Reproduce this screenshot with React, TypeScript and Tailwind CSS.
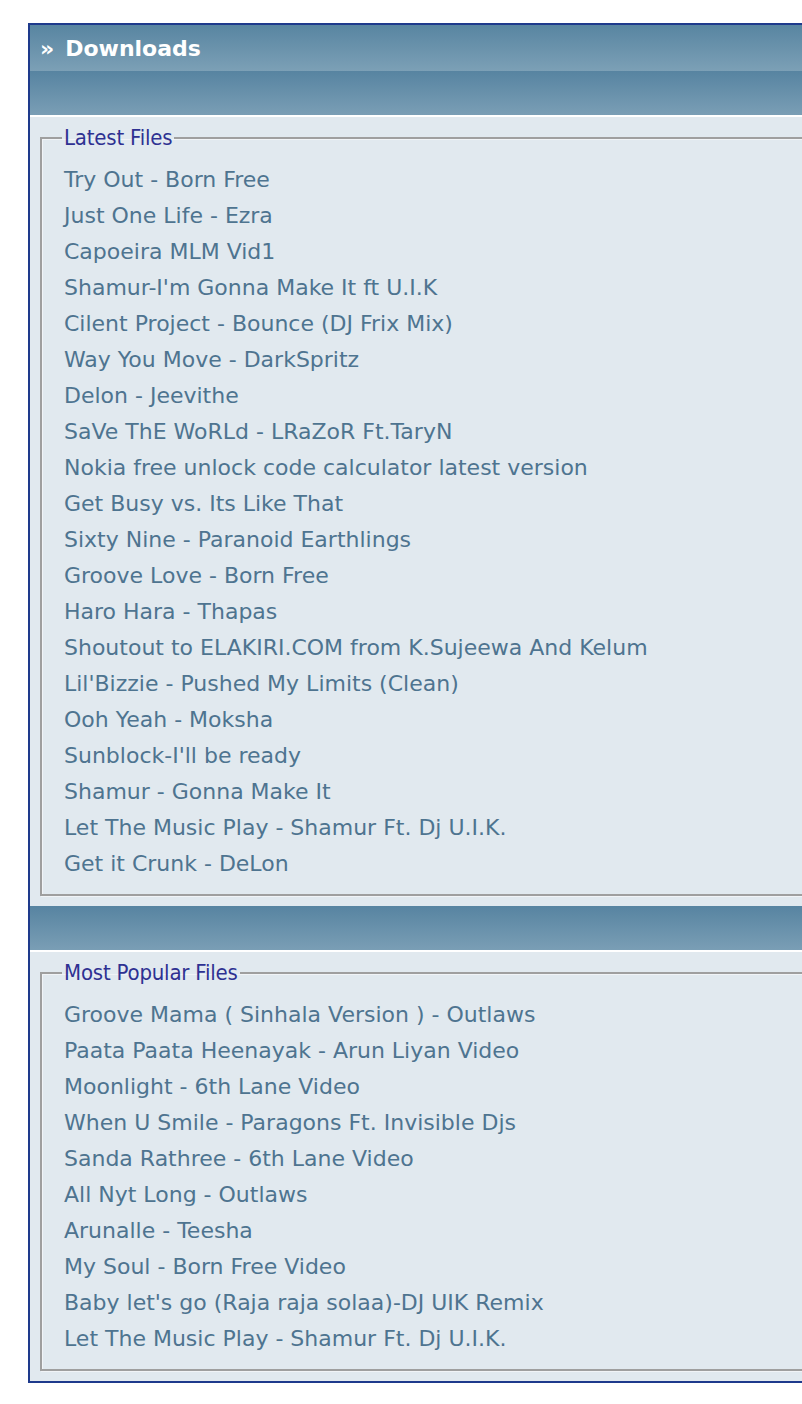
import React from "react";

const latest = [
  "Try Out - Born Free",
  "Just One Life - Ezra",
  "Capoeira MLM Vid1",
  "Shamur-I'm Gonna Make It ft U.I.K",
  "Cilent Project - Bounce (DJ Frix Mix)",
  "Way You Move - DarkSpritz",
  "Delon - Jeevithe",
  "SaVe ThE WoRLd - LRaZoR Ft.TaryN",
  "Nokia free unlock code calculator latest version",
  "Get Busy vs. Its Like That",
  "Sixty Nine - Paranoid Earthlings",
  "Groove Love - Born Free",
  "Haro Hara - Thapas",
  "Shoutout to ELAKIRI.COM from K.Sujeewa And Kelum",
  "Lil'Bizzie - Pushed My Limits (Clean)",
  "Ooh Yeah - Moksha",
  "Sunblock-I'll be ready",
  "Shamur - Gonna Make It",
  "Let The Music Play - Shamur Ft. Dj U.I.K.",
  "Get it Crunk - DeLon",
];

const popular = [
  "Groove Mama ( Sinhala Version ) - Outlaws",
  "Paata Paata Heenayak - Arun Liyan Video",
  "Moonlight - 6th Lane Video",
  "When U Smile - Paragons Ft. Invisible Djs",
  "Sanda Rathree - 6th Lane Video",
  "All Nyt Long - Outlaws",
  "Arunalle - Teesha",
  "My Soul - Born Free Video",
  "Baby let's go (Raja raja solaa)-DJ UIK Remix",
  "Let The Music Play - Shamur Ft. Dj U.I.K.",
];

function Section({ title, items }: { title: string; items: string[] }) {
  return (
    <>
      <div className="h-[44px] bg-gradient-to-b from-[#5784a1] to-[#7a9eb5]" />
      <div className="h-[2px] bg-white" />
      <div className="bg-[#e1e9ef] pt-[9px] pl-[10px] pb-[10px]">
        <fieldset className="border-2 border-solid border-[#9f9f9f] px-[20px] pt-[12px] pb-[12px] shadow-[inset_1px_1px_0_#f1f4f7,1px_1px_0_#f1f4f7]">
          <legend className="px-[2px] text-[22px] leading-[24px] text-[#2e3192] [font-family:'DejaVu_Sans_Condensed','DejaVu_Sans',sans-serif] tracking-[-0.2px]">
            {title}
          </legend>
          <ul className="pl-[2px]">
            {items.map((t, i) => (
              <li key={i} className="h-[36px] leading-[36px] text-[22px] text-[#4e7490] whitespace-nowrap">
                <a href="#">{t}</a>
              </li>
            ))}
          </ul>
        </fieldset>
      </div>
    </>
  );
}

export default function App() {
  return (
    <div className="w-[802px] min-h-[1404px] bg-white overflow-hidden pt-[23px] pb-[21px] [font-family:'DejaVu_Sans',Verdana,sans-serif]">
      <div className="ml-[28px] w-[1000px] border-2 border-[#1e3a8c]">
        <div className="h-[46px] bg-gradient-to-b from-[#5885a1] to-[#7ca0b6] flex items-center pl-[10px] text-white font-bold text-[22px]">
          <span className="mr-[11px]">»</span>
          <span>Downloads</span>
        </div>
        <Section title="Latest Files" items={latest} />
        <Section title="Most Popular Files" items={popular} />
      </div>
    </div>
  );
}
